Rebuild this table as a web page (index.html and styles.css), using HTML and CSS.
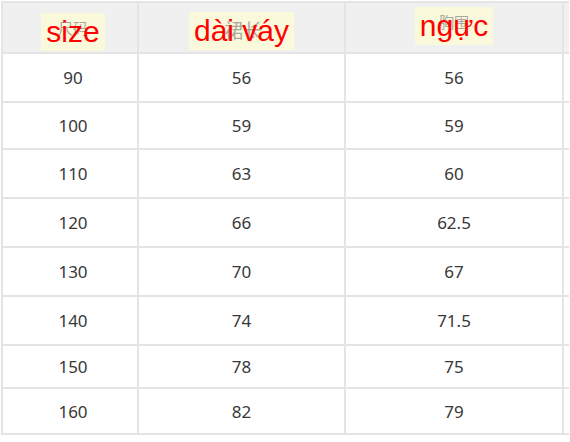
FILE: index.html
```html
<!DOCTYPE html>
<html lang="vi">
<head>
<meta charset="utf-8">
<title>Bảng size</title>
<link rel="stylesheet" href="styles.css">
</head>
<body>
<div class="table">
  <div class="th th-a"><span class="tag"><span class="ghost">尺码</span><span class="label">size</span></span></div>
  <div class="th th-b"><span class="tag"><span class="ghost ghost-b">裙长</span><span class="label">dài váy</span></span></div>
  <div class="th th-c"><span class="tag"><span class="ghost">胸围</span><span class="label">ngực</span></span></div>
  <div class="th th-x"></div>

  <div class="td first">90</div><div class="td">56</div><div class="td">56</div><div class="td"></div>
  <div class="td first">100</div><div class="td">59</div><div class="td">59</div><div class="td"></div>
  <div class="td first">110</div><div class="td">63</div><div class="td">60</div><div class="td"></div>
  <div class="td first">120</div><div class="td">66</div><div class="td">62.5</div><div class="td"></div>
  <div class="td first">130</div><div class="td">70</div><div class="td">67</div><div class="td"></div>
  <div class="td first">140</div><div class="td">74</div><div class="td">71.5</div><div class="td"></div>
  <div class="td first">150</div><div class="td">78</div><div class="td">75</div><div class="td"></div>
  <div class="td first">160</div><div class="td">82</div><div class="td">79</div><div class="td"></div>
</div>
</body>
</html>
```

FILE: styles.css
```css
html, body {
  margin: 0;
  padding: 0;
  background: #ffffff;
  overflow: hidden;
}

body {
  width: 570px;
  height: 442px;
}

.table {
  display: grid;
  grid-template-columns: 134px 205px 216px 5px;
  grid-template-rows: 49px 47px 45px 47px 47px 47px 47px 41px 44px;
  gap: 2px;
  padding: 2px 0 2px 2px;
  margin: 1px 0 0 1px;
  width: max-content;
  background: #e4e4e4;
  font-family: "Noto Sans", "Open Sans", "Noto Sans CJK SC", sans-serif;
}

.th {
  background: #f0f0f0;
  display: flex;
  justify-content: center;
  align-items: flex-end;
}

.th-a {
  padding-bottom: 1px;
  padding-left: 6px;
}

.th-b {
  padding-bottom: 2px;
}

.th-c {
  padding-bottom: 7px;
}

.tag {
  position: relative;
  display: inline-block;
  background: #fbf9db;
  height: 38px;
  padding: 0 5px;
  line-height: 38px;
}

.ghost {
  position: absolute;
  left: 0;
  right: 0;
  top: 6px;
  text-align: center;
  font-family: "Noto Sans CJK SC", sans-serif;
  font-size: 15px;
  line-height: 18px;
  color: #a8a8a0;
}

.ghost-b {
  font-size: 19px;
  line-height: 22px;
  top: 7px;
  left: 4px;
}

.label {
  position: relative;
  font-family: "Liberation Sans", Arial, sans-serif;
  font-size: 30px;
  color: #ff0000;
}

.td {
  background: #ffffff;
  display: flex;
  align-items: center;
  justify-content: center;
  font-size: 17px;
  color: #383838;
}

.td.first {
  padding-left: 6px;
}
```
